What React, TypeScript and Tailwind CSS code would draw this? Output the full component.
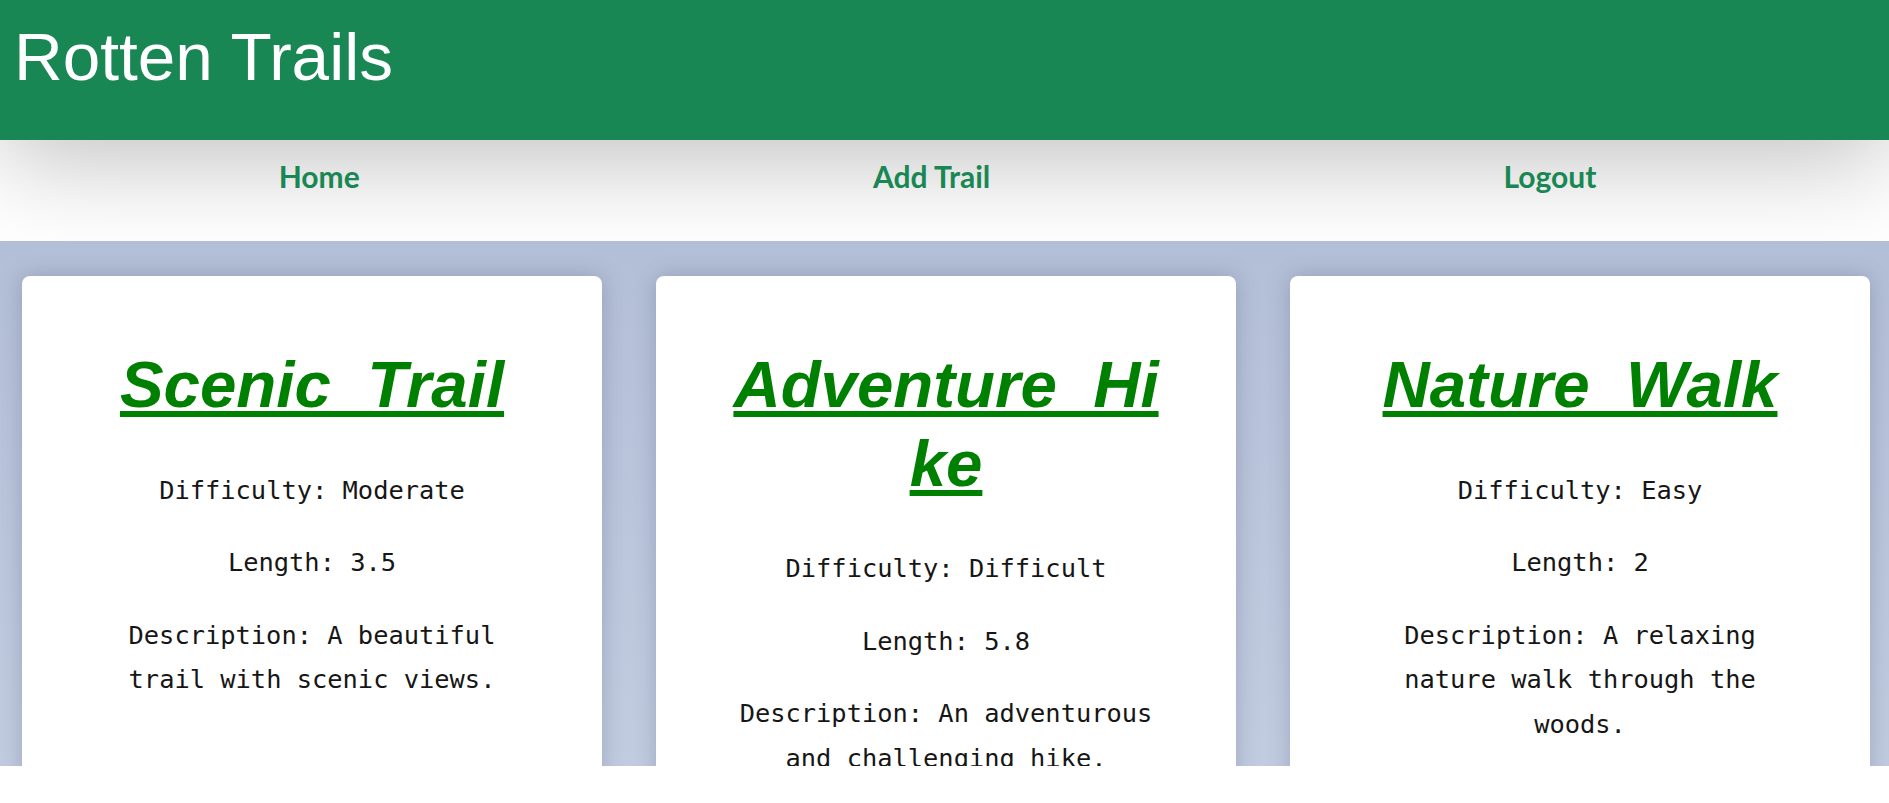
import React from "react";

const trails = [
  {
    name: "Scenic_Trail",
    difficulty: "Moderate",
    length: "3.5",
    description: "A beautiful trail with scenic views.",
  },
  {
    name: "Adventure_Hike",
    difficulty: "Difficult",
    length: "5.8",
    description: "An adventurous and challenging hike.",
  },
  {
    name: "Nature_Walk",
    difficulty: "Easy",
    length: "2",
    description: "A relaxing nature walk through the woods.",
  },
];

function TrailCard({ t }: { t: (typeof trails)[number] }) {
  return (
    <div className="h-[700px] bg-white rounded-lg shadow-[0_0_22px_rgba(60,72,105,0.28)] pt-[70.5px] px-[66px] text-center">
      <h2 className="font-['Liberation_Sans',Arial,sans-serif] font-bold italic text-[65.4px] leading-[78.4px] text-[#008000] underline break-all mb-[43px]">
        {t.name}
      </h2>
      <div className="font-['DejaVu_Sans_Mono',monospace] text-[25.4px] leading-[44.6px] text-[#161616]">
        <p className="mb-[27.8px]">Difficulty: {t.difficulty}</p>
        <p className="mb-[27.8px]">Length: {t.length}</p>
        <p className="mb-[27.8px]">Description: {t.description}</p>
      </div>
    </div>
  );
}

export default function App() {
  return (
    <div className="h-[803px] bg-white flex flex-col overflow-hidden">
      <header className="h-[140px] shrink-0 bg-[#198754] pl-[14px] pt-[18px] shadow-[0_20px_100px_rgba(0,0,0,0.25)]">
        <h1 className="font-['Liberation_Sans',Arial,sans-serif] text-white text-[67.5px] leading-[77px] font-normal">
          Rotten Trails
        </h1>
      </header>
      <nav className="h-[100.7px] shrink-0 flex justify-around items-start pl-[22px] pr-[36px] pt-[18px]">
        {["Home", "Add Trail", "Logout"].map((l) => (
          <a
            key={l}
            href="#"
            className="font-['Lato',sans-serif] font-bold text-[30px] leading-[36px] text-[#198754]"
          >
            {l}
          </a>
        ))}
      </nav>
      <main className="h-[525.3px] shrink-0 overflow-hidden bg-[linear-gradient(to_bottom,#b3bfd7,#c2cce0)] grid grid-cols-3 items-start gap-[54px] pl-[22px] pr-[19px] pt-[35.3px]">
        {trails.map((t) => (
          <TrailCard key={t.name} t={t} />
        ))}
      </main>
      <footer className="flex-1 bg-white" />
    </div>
  );
}
